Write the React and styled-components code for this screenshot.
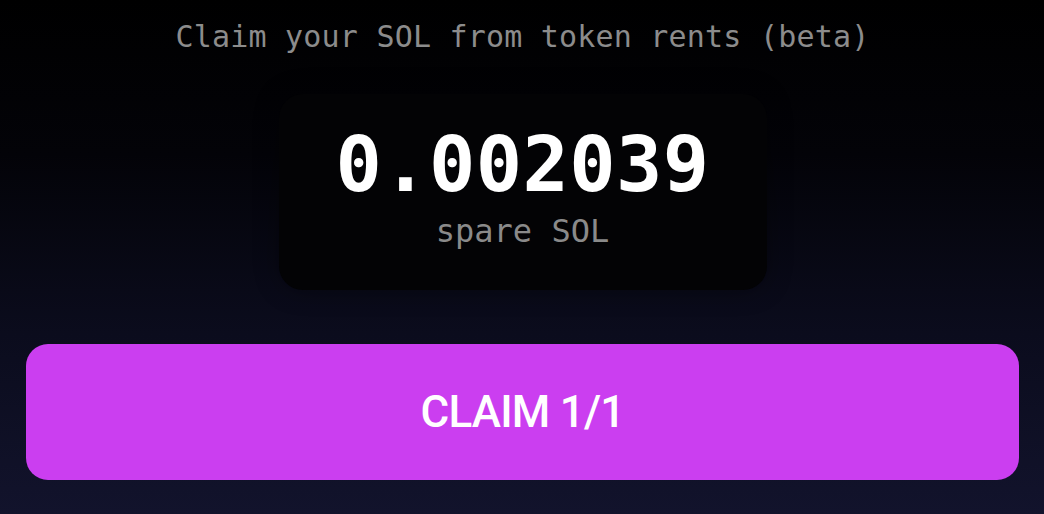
import React from "react";
import styled, { createGlobalStyle } from "styled-components";

const Global = createGlobalStyle`
  html, body { margin: 0; padding: 0; background: #000; }
  body { font-family: "DejaVu Sans Mono", monospace; }
  #root { min-height: 514px; }
`;

const Page = styled.div`
  width: 1044px;
  height: 514px;
  box-sizing: border-box;
  background: linear-gradient(180deg, #000000 0%, #030308 30%, #0b0c1d 65%, #12132c 100%);
  display: flex;
  flex-direction: column;
  align-items: center;
  padding: 18px 25px 0 26px;
  overflow: hidden;
`;

const Subtitle = styled.div`
  font-family: "DejaVu Sans Mono", monospace;
  font-size: 30px;
  line-height: 38px;
  color: #8c8c8c;
  letter-spacing: 0.2px;
`;

const Card = styled.div`
  margin-top: 38px;
  width: 488px;
  height: 196px;
  box-sizing: border-box;
  border-radius: 24px;
  background: #030305;
  box-shadow: 0 0 24px rgba(0, 0, 0, 0.35);
  display: flex;
  flex-direction: column;
  align-items: center;
  padding-top: 32px;
`;

const Amount = styled.div`
  font-family: "DejaVu Sans Mono", monospace;
  font-weight: bold;
  font-size: 77px;
  line-height: 78px;
  color: #ffffff;
  letter-spacing: 0.4px;
`;

const Unit = styled.div`
  font-family: "DejaVu Sans Mono", monospace;
  font-size: 32px;
  line-height: 36px;
  color: #8a8a8a;
  margin-top: 9px;
`;

const ClaimButton = styled.button`
  margin-top: 54px;
  width: 100%;
  height: 136px;
  border: none;
  border-radius: 22px;
  background: #cb3ef0;
  color: #ffffff;
  font-family: Roboto, "Liberation Sans", sans-serif;
  font-weight: 500;
  font-size: 44px;
  letter-spacing: -0.8px;
  cursor: pointer;
`;

export default function App() {
  return (
    <>
      <Global />
      <Page>
        <Subtitle>Claim your SOL from token rents (beta)</Subtitle>
        <Card>
          <Amount>0.002039</Amount>
          <Unit>spare SOL</Unit>
        </Card>
        <ClaimButton>CLAIM 1/1</ClaimButton>
      </Page>
    </>
  );
}
